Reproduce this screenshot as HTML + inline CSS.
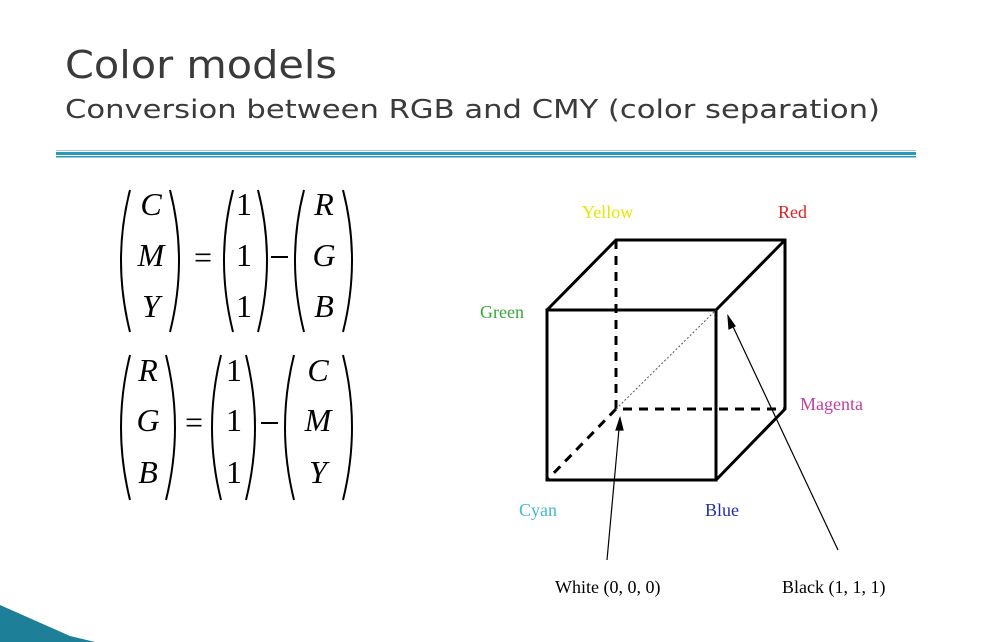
<!DOCTYPE html>
<html><head><style>
body{margin:0;width:1007px;height:642px;background:#fff;overflow:hidden;position:relative;font-family:"Liberation Sans",sans-serif}
</style></head><body>
<svg width="1007" height="642" style="position:absolute;left:0;top:0">
<text x="65" y="78" font-family="DejaVu Sans, sans-serif" font-size="38" fill="#3a3a3a" textLength="272" lengthAdjust="spacingAndGlyphs">Color models</text>
<text x="65" y="118" font-family="DejaVu Sans, sans-serif" font-size="26" fill="#3a3a3a" textLength="815" lengthAdjust="spacingAndGlyphs">Conversion between RGB and CMY (color separation)</text>
<rect x="56" y="150" width="860" height="1" fill="#9cc9d8"/>
<rect x="56" y="152" width="860" height="3" fill="#2b9ab8"/>
<rect x="56" y="156" width="860" height="1.5" fill="#2b9ab8"/>
<polygon points="0,605 0,642 95,642 70,636" fill="#1e7f99"/>
<g fill="none" stroke="#000" stroke-width="2">
<path d="M130,190 Q112,260 130,332"/><path d="M170,190 Q188,260 170,332"/>
<path d="M233,190 Q215,260 233,332"/><path d="M258,190 Q276,260 258,332"/>
<path d="M304,190 Q286,260 304,332"/><path d="M343,190 Q361,260 343,332"/>
<path d="M130,355 Q112,427 130,500"/><path d="M166,355 Q184,427 166,500"/>
<path d="M221,355 Q203,427 221,500"/><path d="M246,355 Q264,427 246,500"/>
<path d="M294,355 Q276,427 294,500"/><path d="M343,355 Q361,427 343,500"/>
</g>
<g font-family="Liberation Serif, serif" font-size="32" text-anchor="middle">
<g font-style="italic"><text x="151" y="215">C</text><text x="151" y="266">M</text><text x="151" y="317">Y</text>
<text x="324" y="215">R</text><text x="324" y="266">G</text><text x="324" y="317">B</text>
<text x="148" y="381">R</text><text x="148" y="431">G</text><text x="148" y="483">B</text>
<text x="318" y="381">C</text><text x="318" y="431">M</text><text x="318" y="483">Y</text></g>
<text x="244" y="215">1</text><text x="244" y="266">1</text><text x="244" y="317">1</text>
<text x="234" y="381">1</text><text x="234" y="431">1</text><text x="234" y="483">1</text>
<text x="203" y="268">=</text><text x="194" y="433">=</text>
</g>
<rect x="271" y="256" width="17" height="2" fill="#000"/>
<rect x="261" y="422" width="17" height="2" fill="#000"/>
<g fill="none" stroke="#000" stroke-width="3">
<rect x="547" y="310" width="169" height="170"/>
<path d="M547,310 L616,240 L785,240 L785,409 L716,480 M716,310 L785,240"/>
</g>
<g fill="none" stroke="#000" stroke-width="3" stroke-dasharray="9,7">
<path d="M616,240 L616,409 L785,409 M616,409 L547,480"/>
</g>
<path d="M616,409 L716,310" stroke="#555" stroke-width="1" stroke-dasharray="2,2"/>
<g stroke="#000" stroke-width="1.2" fill="#000">
<path d="M607,560 L620,418"/><path d="M620,418 L616,430 L623,430Z"/>
<path d="M838,550 L728,316"/><path d="M728,316 L729,329 L735,326Z"/>
</g>
<g font-family="Liberation Serif, serif" font-size="18">
<text x="582" y="218" fill="#e6e600">Yellow</text>
<text x="778" y="218" fill="#e02020">Red</text>
<text x="480" y="318" fill="#3aa53a">Green</text>
<text x="800" y="410" fill="#c040a0">Magenta</text>
<text x="519" y="516" fill="#40b8d8">Cyan</text>
<text x="705" y="516" fill="#2030a0">Blue</text>
<text x="555" y="593" fill="#000">White (0, 0, 0)</text>
<text x="782" y="593" fill="#000">Black (1, 1, 1)</text>
</g>
</svg>
</body></html>
